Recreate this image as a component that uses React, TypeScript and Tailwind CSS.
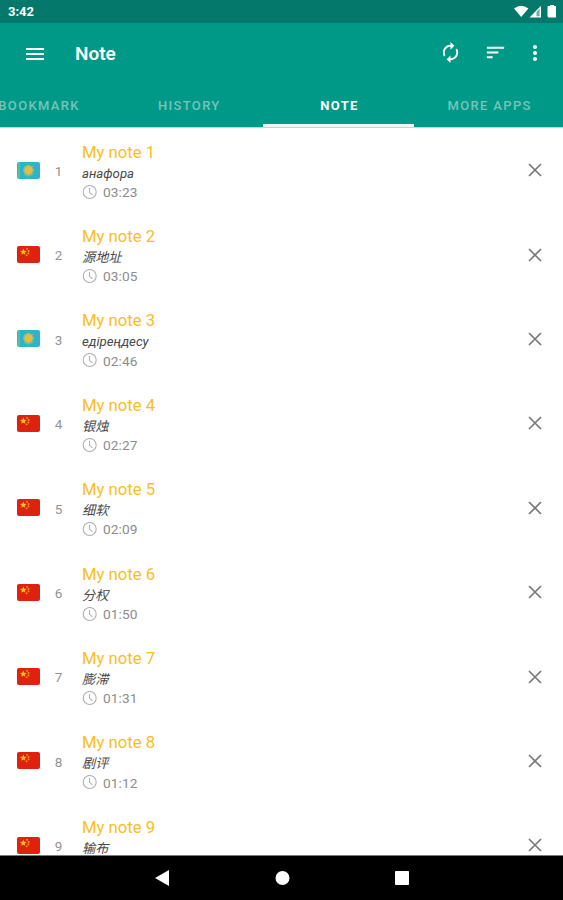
import clsx from "clsx";

const TABS = ["BOOKMARK", "HISTORY", "NOTE", "MORE APPS"];

const NOTES = [
  { id: 1, flag: "kz", word: "анафора", time: "03:23" },
  { id: 2, flag: "cn", word: "源地址", time: "03:05" },
  { id: 3, flag: "kz", word: "едіреңдесу", time: "02:46" },
  { id: 4, flag: "cn", word: "银烛", time: "02:27" },
  { id: 5, flag: "cn", word: "细软", time: "02:09" },
  { id: 6, flag: "cn", word: "分权", time: "01:50" },
  { id: 7, flag: "cn", word: "膨滞", time: "01:31" },
  { id: 8, flag: "cn", word: "剧评", time: "01:12" },
  { id: 9, flag: "cn", word: "输布" },
];

const STAR = "M0-3 .8-1 2.9-.9 1.2.4 1.8 2.4 0 1.3-1.8 2.4-1.2.4-2.9-.9-.8-1z";

function Flag({ code }: { code: string }) {
  if (code === "kz") {
    return (
      <svg className="h-[17px] w-[23px] shrink-0" viewBox="0 0 23 17">
        <rect width="23" height="17" rx="2" fill="#2bb5ca" />
        <path d="M2 1v15" stroke="#8fbb87" strokeWidth="1.2" />
        <circle cx="11.5" cy="8.2" r="5.2" fill="#8fbb87" />
        <g stroke="#c9bd62" strokeWidth="1">
          <path d="M11.5 2.8v11M6 8.3h11M7.6 4.4l7.8 7.8M7.6 12.2l7.8-7.8" />
        </g>
        <circle cx="11.5" cy="8.2" r="3.8" fill="#e8bb45" />
        <path d="M7 12.8q4.5 3 9 0" fill="none" stroke="#79bd91" strokeWidth=".7" />
      </svg>
    );
  }

  return (
    <svg className="h-[17px] w-[23px] shrink-0" viewBox="0 0 23 17">
      <rect width="23" height="17" rx="2" fill="#df2110" />
      <path d={STAR} fill="#ffc91f" transform="translate(6.3 6) scale(1.15)" />
      <g fill="#f9a51a">
        <circle cx="10" cy="2.8" r=".9" />
        <circle cx="11.6" cy="5" r=".9" />
        <circle cx="11.4" cy="7.4" r=".9" />
        <circle cx="9.6" cy="9.3" r=".9" />
      </g>
    </svg>
  );
}

function StatusBar() {
  return (
    <div className="flex h-[23px] shrink-0 items-center justify-between bg-[#03786b] pr-[7px] pl-2">
      <span className="pt-px text-[13px] leading-4 font-bold">3:42</span>
      <svg className="h-[14px] w-[42px]" viewBox="0 0 42 14" fill="#fff">
        <path d="M0 3.4Q7.2-2 14.4 3.4L7.2 12z" />
        <path d="M15.5 12.5 27 .8v11.7z" />
        <path d="M22.5 7 25.6 3.8v7.4h-3.1z" fill="#03786b" opacity=".6" />
        <path d="M34 1h2V0h4v1h2q.5 0 .5.5V11q0 1.5-1.5 1.5h-6q-1.5 0-1.5-1.5V1.5q0-.5.5-.5z" />
      </svg>
    </div>
  );
}

function AppBar() {
  return (
    <div className="flex h-[61px] shrink-0 items-center pr-[16px] pl-[23px]">
      <svg className="size-[24px]" viewBox="0 0 24 24" fill="currentColor">
        <path d="M3 18h18v-2H3v2zm0-5h18v-2H3v2zm0-7v2h18V6H3z" />
      </svg>
      <h1 className="ml-[28px] flex-1 text-[19px] leading-6 font-semibold">Note</h1>
      <svg className="mb-[2px] size-[23px]" viewBox="0 0 24 24" fill="currentColor">
        <path d="M12 6v3l4-4-4-4v3c-4.42 0-8 3.58-8 8 0 1.57.46 3.03 1.24 4.26L6.7 14.8c-.45-.83-.7-1.79-.7-2.8 0-3.31 2.69-6 6-6zm6.76 1.74L17.3 9.2c.44.84.7 1.79.7 2.8 0 3.31-2.69 6-6 6v-3l-4 4 4 4v-3c4.42 0 8-3.58 8-8 0-1.57-.46-3.03-1.24-4.26z" />
      </svg>
      <svg className="mb-[2px] ml-[22px] size-[23px]" viewBox="0 0 24 24" fill="currentColor">
        <path d="M3 18h6v-2H3v2zM3 6v2h18V6H3zm0 7h12v-2H3v2z" />
      </svg>
      <svg className="mb-[2px] ml-[16px] size-[24px]" viewBox="0 0 24 24" fill="currentColor">
        <path d="M12 8c1.1 0 2-.9 2-2s-.9-2-2-2-2 .9-2 2 .9 2 2 2zm0 2c-1.1 0-2 .9-2 2s.9 2 2 2 2-.9 2-2-.9-2-2-2zm0 6c-1.1 0-2 .9-2 2s.9 2 2 2 2-.9 2-2-.9-2-2-2z" />
      </svg>
    </div>
  );
}

export default function App() {
  return (
    <div className="flex h-[900px] w-[563px] flex-col overflow-hidden bg-white font-[Roboto,'Noto_Sans_CJK_SC',sans-serif]">
      <header className="flex h-[128px] shrink-0 flex-col border-b border-[#b3dcd8] bg-[#009887] text-white">
        <StatusBar />
        <AppBar />
        <nav className="-ml-[37px] flex h-[43px]">
          {TABS.map((tab) => (
            <div
              key={tab}
              className={clsx(
                "flex w-[150.2px] shrink-0 items-center justify-center border-b-[3px] text-[13px] tracking-[1.35px]",
                tab === "NOTE"
                  ? "border-[#f4f4f4] font-bold text-white"
                  : "border-transparent font-medium text-[#74c5bc]"
              )}
            >
              <span className="pt-[3px] pl-[2px]">{tab}</span>
            </div>
          ))}
        </nav>
      </header>

      <main className="min-h-0 flex-1 overflow-hidden">
        {NOTES.map((note) => (
          <div key={note.id} className="flex h-[84.4px] items-center pr-[19px] pl-[16.5px]">
            <Flag code={note.flag} />
            <span className="w-[38px] pt-[2px] text-center text-[13.5px] text-[#929292]">
              {note.id}
            </span>
            <div className="ml-[4.5px] flex-1 pt-[3px]">
              <p className="text-[16.7px] leading-[22px] text-[#fcbd22]">My note {note.id}</p>
              <p className="h-[19px] text-[13.2px] leading-[19px] text-[#484848] italic">
                {note.word}
              </p>
              <div className="flex h-[19px] items-center gap-[6px] text-[13.7px] text-[#8d8d8d]">
                {note.time && (
                  <>
                    <svg
                      className="size-[15px]"
                      viewBox="0 0 15 15"
                      fill="none"
                      stroke="#b0b0b0"
                      strokeWidth="1.1"
                    >
                      <circle cx="7.7" cy="7" r="6.5" />
                      <path d="M7.5 3v4.3l3 2.5" />
                    </svg>
                    <span className="tracking-[.1px]">{note.time}</span>
                  </>
                )}
              </div>
            </div>
            <svg
              className="size-[18px]"
              viewBox="0 0 18 18"
              stroke="#777"
              strokeWidth="1.7"
            >
              <path d="M3 3l12 12M15 3L3 15" />
            </svg>
          </div>
        ))}
      </main>

      <footer className="flex h-[45px] shrink-0 items-center justify-center border-t border-[#777] bg-black pl-px">
        <svg className="h-[18px] w-[255px]" viewBox="0 0 255 18" fill="#fff">
          <path d="M0 9 14 1v16z" />
          <circle cx="127.5" cy="9" r="7" />
          <rect x="240" y="2" width="14" height="14" rx=".7" />
        </svg>
      </footer>
    </div>
  );
}
